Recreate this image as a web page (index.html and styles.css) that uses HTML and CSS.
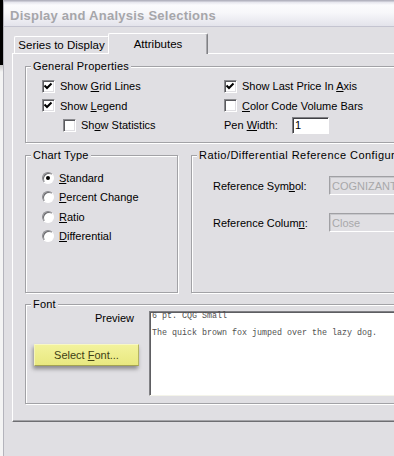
FILE: index.html
```html
<!DOCTYPE html>
<html>
<head>
<meta charset="utf-8">
<link rel="stylesheet" href="styles.css">
</head>
<body>
<div class="screen">
  <div class="desk"></div>
  <div class="window">
    <div class="titlebar"><span class="title">Display and Analysis Selections</span></div>
    <div class="client">
      <div class="tabs">
        <div class="tab">Series to Display</div>
        <div class="tab active">Attributes</div>
      </div>
      <div class="panel">
        <fieldset class="group general">
          <legend>General Properties</legend>
          <div class="gp">
            <div class="check"><span class="cb on"><svg viewBox="0 0 13 13" width="13" height="13"><polyline points="2.5,5.5 5,8 9.5,3.5" /></svg></span><span>Show <u>G</u>rid Lines</span></div>
            <div class="check"><span class="cb on"><svg viewBox="0 0 13 13" width="13" height="13"><polyline points="2.5,5.5 5,8 9.5,3.5" /></svg></span><span>Show Last Price In <u>A</u>xis</span></div>
            <div class="check"><span class="cb on"><svg viewBox="0 0 13 13" width="13" height="13"><polyline points="2.5,5.5 5,8 9.5,3.5" /></svg></span><span>Show <u>L</u>egend</span></div>
            <div class="check"><span class="cb"></span><span><u>C</u>olor Code Volume Bars</span></div>
            <div class="check indent"><span class="cb"></span><span>Sh<u>o</u>w Statistics</span></div>
            <div class="pen"><span class="pen-label">Pen <u>W</u>idth:</span><span class="field">1</span></div>
          </div>
        </fieldset>
        <div class="mid">
          <fieldset class="group chart">
            <legend>Chart Type</legend>
            <div class="radios">
              <div class="radio"><span class="rb on"></span><span><u>S</u>tandard</span></div>
              <div class="radio"><span class="rb"></span><span><u>P</u>ercent Change</span></div>
              <div class="radio"><span class="rb"></span><span><u>R</u>atio</span></div>
              <div class="radio"><span class="rb"></span><span><u>D</u>ifferential</span></div>
            </div>
          </fieldset>
          <fieldset class="group ratio">
            <legend>Ratio/Differential Reference Configuration</legend>
            <div class="refs">
              <span class="ref-label">Reference Sym<u>b</u>ol:</span><span class="field disabled">COGNIZANT</span>
              <span class="ref-label">Reference Colum<u>n</u>:</span><span class="field disabled">Close</span>
            </div>
          </fieldset>
        </div>
        <fieldset class="group font">
          <legend>Font</legend>
          <div class="fontrow">
            <div class="fontleft">
              <div class="preview-label">Preview</div>
              <div class="btn"><span>Select <u>F</u>ont...</span></div>
            </div>
            <div class="preview">
              <div class="pv1">6 pt. CQG Small</div>
              <div class="pv2">The quick brown fox jumped over the lazy dog.</div>
            </div>
          </div>
        </fieldset>
      </div>
    </div>
  </div>
</div>
</body>
</html>
```
FILE: styles.css
```css
html, body {
  margin: 0;
  padding: 0;
}
body {
  width: 394px;
  height: 456px;
  overflow: hidden;
  background: #e0dfe3;
  font-family: "Liberation Sans", Arial, sans-serif;
  font-size: 11px;
  color: #000;
}
u { text-decoration: underline; text-underline-offset: 1px; }

.screen {
  display: flex;
  height: 456px;
}
.desk {
  flex: none;
  width: 3px;
  background: linear-gradient(#000 0, #000 65px, #c8c8c8 65px, #f4f4f4 72px, #f4f4f4 100%);
}
.window {
  flex: none;
  width: 560px;
  border-left: 1px solid #b4b4bc;
  background: #e0dfe3;
}
.titlebar {
  height: 27px;
  box-sizing: border-box;
  padding: 5px 0 0 6px;
  display: flex;
  align-items: center;
  border-bottom: 1px solid #c4c4d0;
  background: linear-gradient(#b4b4c0 0, #b4b4c0 1px, #e4e4ec 2px, #fbfbfd 5px, #f7f7fa 13px, #e3e3eb 26px);
}
.title {
  font-weight: bold;
  font-size: 13px;
  letter-spacing: 0.25px;
  color: #a6a6aa;
}

.client {
  padding: 6px 0 0 8px;
}
.tabs {
  display: flex;
  align-items: flex-end;
  height: 20px;
  padding-left: 2px;
  position: relative;
  z-index: 1;
}
.tab {
  box-sizing: border-box;
  width: 95px;
  height: 17px;
  display: flex;
  align-items: center;
  justify-content: center;
  border-top: 1px solid #fff;
  border-left: 1px solid #fff;
  border-right: 1px solid #808084;
  border-radius: 2px 2px 0 0;
  background: #e0dfe3;
  font-size: 11.5px;
}
.tab.active {
  width: 100px;
  height: 21px;
  margin-left: -1px;
  margin-bottom: -1px;
  padding-bottom: 1px;
  box-shadow: inset -1px 0 #a8a8ac;
}

.panel {
  width: 540px;
  border-top: 1px solid #fff;
  border-left: 1px solid #fff;
  border-bottom: 1px solid #6e6e72;
  box-shadow: inset 0 -1px #a4a4a8;
  padding: 5px 0 17px 12px;
}

.group {
  margin: 0;
  padding: 0;
  min-inline-size: 0;
  border: 1px solid #a2a2a6;
  box-shadow: 1px 1px 0 #fff, inset 1px 1px 0 #fff;
}
.group legend {
  margin-left: 5px;
  padding: 0 2px;
  line-height: 14px;
  background: #e0dfe3;
  letter-spacing: 0.2px;
}
.ratio legend {
  letter-spacing: 0.45px;
}

.gp {
  display: grid;
  grid-template-columns: 182px 1fr;
  grid-template-rows: 20px 19px 20px;
  padding: 3px 0 7px 16px;
}
.check {
  display: flex;
  align-items: center;
  gap: 5px;
}
.check.indent {
  padding-left: 21px;
}
.cb {
  flex: none;
  box-sizing: border-box;
  width: 13px;
  height: 13px;
  border: 1px solid;
  border-color: #8a8a8e #fff #fff #8a8a8e;
  background: #fff;
  box-shadow: inset 1px 1px #5a5a5e, inset -1px -1px #e0dfe3;
  position: relative;
}
.cb svg {
  position: absolute;
  left: -1px;
  top: -1px;
}
.cb polyline {
  fill: none;
  stroke: #000;
  stroke-width: 2;
}
.pen {
  display: flex;
  align-items: center;
}
.pen-label {
  width: 68px;
}
.field {
  box-sizing: border-box;
  display: flex;
  align-items: center;
  width: 37px;
  height: 17px;
  padding: 0 2px;
  border: 1px solid;
  border-color: #808084 #fff #fff #808084;
  box-shadow: inset 1px 1px #404044;
  background: #fff;
}

.mid {
  display: flex;
  gap: 13px;
  height: 145px;
  margin-top: 5px;
}
.chart {
  width: 153px;
  box-sizing: border-box;
  flex: none;
}
.ratio {
  flex: 1;
}
.radios {
  display: grid;
  grid-auto-rows: 19.5px;
  padding: 6px 0 0 16px;
}
.radio {
  display: flex;
  align-items: center;
  gap: 5px;
}
.rb {
  flex: none;
  box-sizing: border-box;
  width: 12px;
  height: 12px;
  border-radius: 50%;
  border: 1px solid;
  border-color: #8a8a8e #fff #fff #8a8a8e;
  background: #fff;
  box-shadow: inset 1px 1px #6a6a6e;
  display: flex;
  align-items: center;
  justify-content: center;
}
.rb.on::after {
  content: "";
  width: 4px;
  height: 4px;
  border-radius: 50%;
  background: #000;
}
.refs {
  display: grid;
  grid-template-columns: 116px 200px;
  grid-template-rows: 19px 19px;
  row-gap: 18px;
  align-items: center;
  padding: 14px 0 0 21px;
}
.field.disabled {
  width: 200px;
  height: 19px;
  border-color: #a0a0a4 #fff #fff #a0a0a4;
  box-shadow: inset 1px 1px #c8c8cc;
  background: #e0dfe3;
  color: #a8a8aa;
}

.font {
  margin-top: 4px;
}
.fontrow {
  display: flex;
  padding: 0 0 7px 8px;
}
.fontleft {
  width: 105px;
  flex: none;
}
.preview-label {
  line-height: 14px;
  text-align: right;
  padding-right: 5px;
}
.btn {
  box-sizing: border-box;
  margin-top: 19px;
  height: 22px;
  display: flex;
  align-items: center;
  justify-content: center;
  border: 1px solid;
  border-color: #f8f8c4 #b4b462 #a4a452 #f4f4b8;
  background: linear-gradient(#f2f29c, #e8e880);
  box-shadow: -1px 3px 4px rgba(0, 0, 0, 0.38);
  color: #404014;
}
.preview {
  margin-left: 10px;
  width: 300px;
  height: 85px;
  box-sizing: border-box;
  border: 1px solid;
  border-color: #808084 #f4f4ea #f4f4ea #808084;
  box-shadow: inset 1px 1px #5e5e62;
  background: #fff;
  padding: 0 2px;
  font-family: "Liberation Mono", "DejaVu Sans Mono", monospace;
  font-size: 8.33px;
  line-height: 10px;
  color: #505050;
  white-space: nowrap;
}
.pv1 {
  margin-top: -1px;
}
.pv2 {
  margin-top: 7px;
}
```
